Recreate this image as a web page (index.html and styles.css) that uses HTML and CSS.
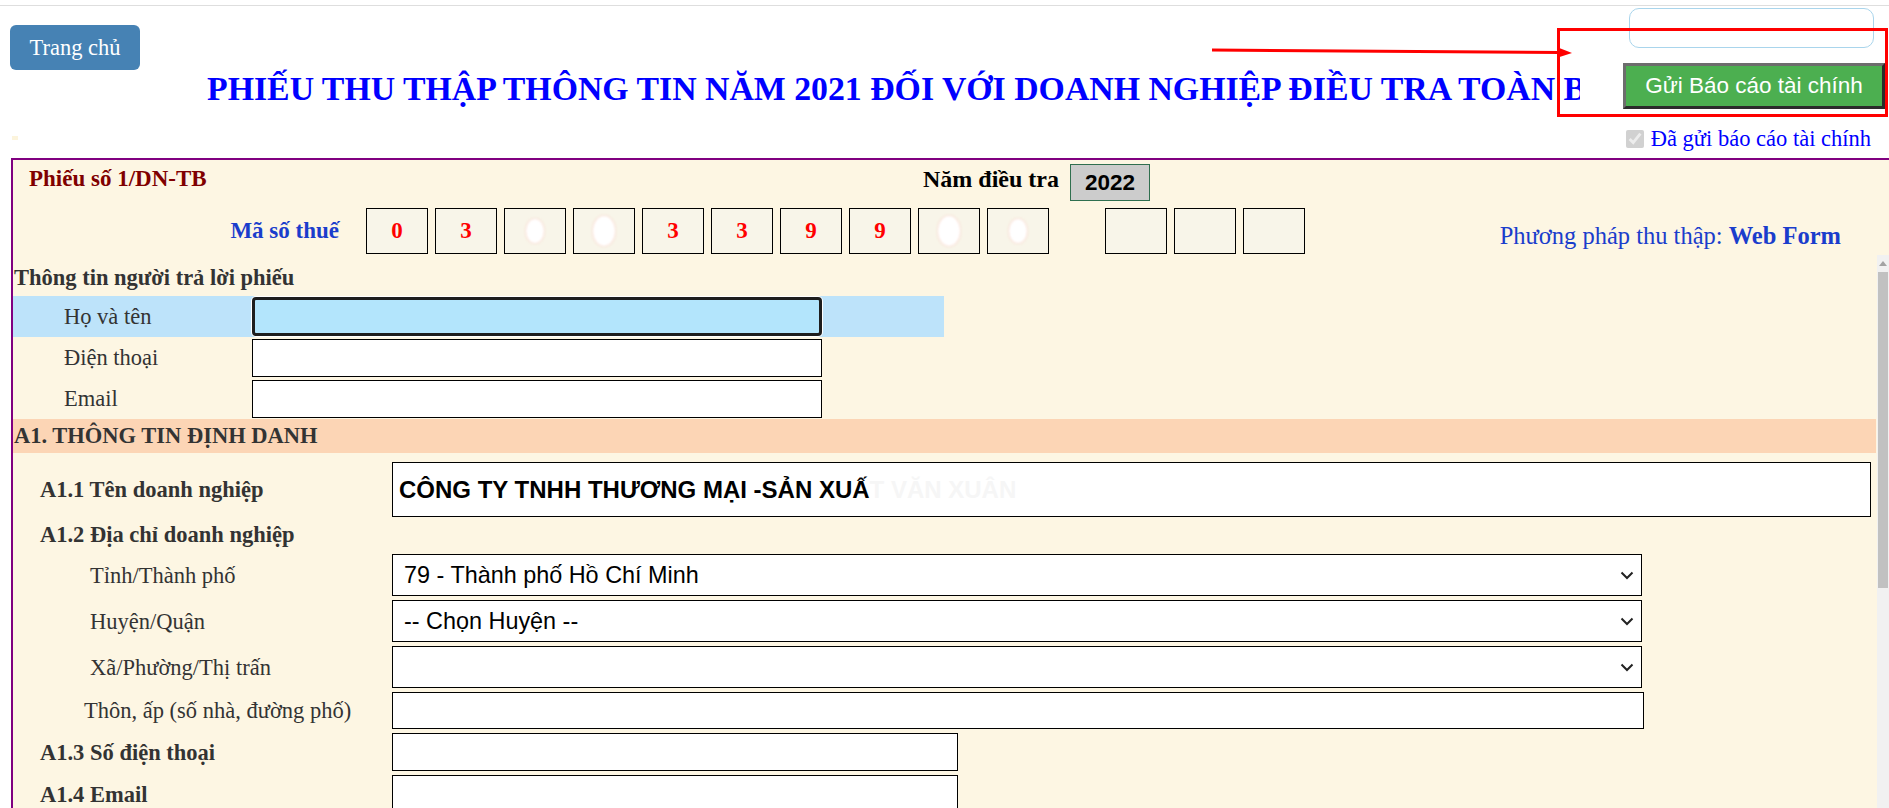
FILE: index.html
```html
<!DOCTYPE html>
<html lang="vi">

<head>
    <meta charset="UTF-8">
    <meta name="viewport" content="width=device-width, initial-scale=1.0">
    <title>Phiếu thu thập thông tin doanh nghiệp</title>
    <link rel="stylesheet" href="styles.css">
</head>

<body>
    <header class="top">
        <div class="top-left">
            <a href="#" class="btn-home">Trang chủ</a>
            <span class="mark"></span>
        </div>

        <h1 class="title">PHIẾU THU THẬP THÔNG TIN NĂM 2021 ĐỐI VỚI DOANH NGHIỆP ĐIỀU TRA TOÀN BỘ</h1>

        <div class="top-right">
            <div class="notice"></div>
            <button type="button" class="btn-send">Gửi Báo cáo tài chính</button>
            <label class="sent"><input type="checkbox" checked disabled>Đã gửi báo cáo tài chính</label>
        </div>
    </header>

    <!-- red pointer drawn on top of the header -->
    <svg class="callout" width="1889" height="160" viewBox="0 0 1889 160">
        <path d="M1212 50 L1560 52.5" stroke="#ff0000" stroke-width="3" fill="none" />
        <path d="M1558 47.5 L1572 53 L1558 57.5 Z" fill="#ff0000" />
        <rect x="1558.5" y="29.5" width="328" height="86" fill="none" stroke="#ff0000" stroke-width="3" />
    </svg>

    <main class="sheet">
        <div class="sheet-head">
            <div class="sheet-no">Phiếu số 1/DN-TB</div>
            <div class="year-label">Năm điều tra</div>
            <div class="year-box">2022</div>
        </div>

        <div class="tax-row">
            <div class="tax-label">Mã số thuế</div>
            <div class="digits">
                <span class="digit">0</span>
                <span class="digit">3</span>
                <span class="digit"><i class="smudge"></i></span>
                <span class="digit"><i class="smudge smudge-wide"></i></span>
                <span class="digit">3</span>
                <span class="digit">3</span>
                <span class="digit">9</span>
                <span class="digit">9</span>
                <span class="digit"><i class="smudge smudge-wide"></i></span>
                <span class="digit"><i class="smudge"></i></span>
            </div>
            <div class="digits branch">
                <span class="digit"></span>
                <span class="digit"></span>
                <span class="digit"></span>
            </div>
            <div class="method">Phương pháp thu thập: <b>Web Form</b></div>
        </div>

        <div class="scroll-area">
            <div class="scroll-body">
                <div class="resp-title">Thông tin người trả lời phiếu</div>
                <div class="resp-row is-active">
                    <label for="resp-name">Họ và tên</label>
                    <input type="text" id="resp-name" class="field field-focus">
                </div>
                <div class="resp-row">
                    <label for="resp-phone">Điện thoại</label>
                    <input type="text" id="resp-phone" class="field">
                </div>
                <div class="resp-row">
                    <label for="resp-email">Email</label>
                    <input type="text" id="resp-email" class="field">
                </div>

                <div class="section-bar">A1. THÔNG TIN ĐỊNH DANH</div>

                <div class="a1">
                    <div class="a1-row">
                        <label class="a1-label">A1.1 Tên doanh nghiệp</label>
                        <div class="field field-name">CÔNG TY TNHH THƯƠNG MẠI -SẢN XUẤ<span class="smear">T VĂN XUÂN</span></div>
                    </div>
                    <div class="a1-row a1-group">
                        <span class="a1-label">A1.2 Địa chỉ doanh nghiệp</span>
                    </div>
                    <div class="a1-row">
                        <label class="a1-label sub" for="tinh">Tỉnh/Thành phố</label>
                        <span class="select-wrap">
                            <select id="tinh" class="field field-select">
                                <option>79 - Thành phố Hồ Chí Minh</option>
                            </select>
                            <svg class="chevron" width="14" height="9" viewBox="0 0 14 9"><path d="M1.5 1.5 L7 7 L12.5 1.5" fill="none" stroke="#222" stroke-width="2" /></svg>
                        </span>
                    </div>
                    <div class="a1-row">
                        <label class="a1-label sub" for="huyen">Huyện/Quận</label>
                        <span class="select-wrap">
                            <select id="huyen" class="field field-select">
                                <option>-- Chọn Huyện --</option>
                            </select>
                            <svg class="chevron" width="14" height="9" viewBox="0 0 14 9"><path d="M1.5 1.5 L7 7 L12.5 1.5" fill="none" stroke="#222" stroke-width="2" /></svg>
                        </span>
                    </div>
                    <div class="a1-row">
                        <label class="a1-label sub" for="xa">Xã/Phường/Thị trấn</label>
                        <span class="select-wrap">
                            <select id="xa" class="field field-select">
                                <option></option>
                            </select>
                            <svg class="chevron" width="14" height="9" viewBox="0 0 14 9"><path d="M1.5 1.5 L7 7 L12.5 1.5" fill="none" stroke="#222" stroke-width="2" /></svg>
                        </span>
                    </div>
                    <div class="a1-row">
                        <label class="a1-label sub sub-long" for="thon">Thôn, ấp (số nhà, đường phố)</label>
                        <input type="text" id="thon" class="field field-street">
                    </div>
                    <div class="a1-row">
                        <label class="a1-label" for="sdt">A1.3 Số điện thoại</label>
                        <input type="text" id="sdt" class="field field-short">
                    </div>
                    <div class="a1-row">
                        <label class="a1-label" for="mail">A1.4 Email</label>
                        <input type="text" id="mail" class="field field-short">
                    </div>
                </div>
            </div>

            <div class="scrollbar">
                <span class="sb-up"></span>
                <span class="sb-thumb"></span>
            </div>
        </div>
    </main>
</body>

</html>
```

FILE: styles.css
```css
html,
body {
    overflow: hidden;
}

body {
    margin: 0;
    padding-top: 5px;
    position: relative;
    font-family: "Liberation Serif", "Times New Roman", serif;
    font-size: 22.5px;
    color: #333;
    background-color: #fff;
}

/* header: three pieces stacked in one grid cell */
.top {
    display: grid;
    border-top: 1px solid #dedede;
}

.top > * {
    grid-area: 1 / 1;
}

.top-left {
    justify-self: start;
    display: flex;
    flex-direction: column;
    align-items: flex-start;
    padding-left: 10px;
}

.btn-home {
    margin-top: 19px;
    width: 130px;
    height: 45px;
    display: flex;
    align-items: center;
    justify-content: center;
    background-color: #4682b4;
    color: #fff;
    text-decoration: none;
    border-radius: 6px;
}

.mark {
    width: 6px;
    height: 4px;
    margin: 66px 0 0 2px;
    background-color: #fcf4dc;
}

/* the long title is cut before the right-hand panel */
.title {
    justify-self: start;
    align-self: start;
    width: 1373px;
    margin: 63px 0 0 207px;
    overflow: hidden;
    font-size: 33.8px;
    line-height: 40px;
    color: #0000ff;
    white-space: nowrap;
}

.top-right {
    justify-self: end;
    display: flex;
    flex-direction: column;
    align-items: flex-end;
}

.notice {
    margin: 2px 15px 0 0;
    width: 245px;
    height: 40px;
    box-sizing: border-box;
    border: 1px solid #a9d5ec;
    border-radius: 10px;
    background-color: #fff;
}

.btn-send {
    margin: 15px 4px 0 0;
    width: 262px;
    height: 46px;
    padding: 0;
    font-family: "Liberation Sans", Arial, sans-serif;
    font-size: 22.5px;
    color: #fff;
    background-color: #4caf50;
    border: 3px solid;
    border-color: #6d6d6d #2b2b2b #2b2b2b #6d6d6d;
}

.sent {
    margin: 17px 18px 0 0;
    display: flex;
    align-items: center;
    gap: 7px;
    line-height: 26px;
    color: #0000ff;
}

.sent input {
    width: 18px;
    height: 18px;
    margin: 0;
}

.callout {
    position: absolute;
    top: 0;
    left: 0;
    pointer-events: none;
}

/* form sheet */
.sheet {
    margin: 6px 0 0 11px;
    border: 2px solid #800080;
    border-right: 0;
    background-color: #fdf6e3;
}

.sheet-head {
    display: flex;
    align-items: flex-start;
    height: 44px;
    padding: 4px 0 0 16px;
    box-sizing: border-box;
}

.sheet-no {
    flex: none;
    width: 894px;
    margin-top: 1px;
    font-size: 23px;
    line-height: 28px;
    font-weight: bold;
    color: #800000;
}

.year-label {
    margin-top: 1px;
    font-size: 24px;
    line-height: 28px;
    font-weight: bold;
    color: #000;
}

.year-box {
    margin-left: 11px;
    width: 80px;
    height: 37px;
    box-sizing: border-box;
    display: flex;
    align-items: center;
    justify-content: center;
    border: 1px solid #2f6f4f;
    background-color: #cccccc;
    font-family: "Liberation Sans", Arial, sans-serif;
    font-size: 22.5px;
    font-weight: bold;
    color: #000;
}

.tax-row {
    display: flex;
    align-items: flex-start;
    height: 51px;
    padding-top: 4px;
    box-sizing: border-box;
}

.tax-label {
    flex: none;
    width: 353px;
    padding-right: 27px;
    margin-top: 9px;
    box-sizing: border-box;
    text-align: right;
    font-size: 23px;
    line-height: 28px;
    font-weight: bold;
    color: #1a3dcc;
}

.digits {
    display: flex;
    gap: 7px;
}

.digits.branch {
    margin-left: 56px;
}

.digit {
    width: 62px;
    height: 46px;
    box-sizing: border-box;
    display: flex;
    align-items: center;
    justify-content: center;
    border: 1px solid #000;
    background-color: #f8f5e9;
    font-size: 23px;
    font-weight: bold;
    color: #ff0000;
}

.smudge {
    width: 18px;
    height: 24px;
    border-radius: 50%;
    background-color: #fff;
    box-shadow: 0 0 2px rgba(255, 120, 120, 0.5);
    filter: blur(1px);
}

.smudge-wide {
    width: 22px;
    height: 30px;
}

.method {
    margin: 14px 48px 0 auto;
    font-size: 24.5px;
    line-height: 28px;
    color: #1a3dcc;
}

/* lower part with its own scrollbar */
.scroll-area {
    display: flex;
    height: 553px;
    overflow: hidden;
}

.scroll-body {
    flex: 1;
    min-width: 0;
}

.scrollbar {
    flex: none;
    width: 12px;
    display: flex;
    flex-direction: column;
    align-items: center;
    background-color: #f1f1f1;
}

.sb-up {
    margin-top: 6px;
    border-left: 4px solid transparent;
    border-right: 4px solid transparent;
    border-bottom: 5px solid #a3a3a3;
}

.sb-thumb {
    margin-top: 6px;
    width: 10px;
    height: 316px;
    background-color: #c1c1c1;
}

.resp-title {
    padding: 9px 0 5px 1px;
    line-height: 27px;
    font-weight: bold;
}

.resp-row {
    display: flex;
    align-items: center;
    width: 931px;
    height: 41px;
}

.resp-row label {
    flex: none;
    width: 239px;
    padding-left: 51px;
    box-sizing: border-box;
    line-height: 27px;
}

.resp-row.is-active {
    background-color: #bde3fa;
}

.field {
    box-sizing: border-box;
    margin: 0;
    border: 1px solid #000;
    border-radius: 0;
    background-color: #fff;
    font-family: "Liberation Sans", Arial, sans-serif;
    font-size: 23.4px;
    color: #000;
}

.resp-row .field {
    width: 570px;
    height: 38px;
}

.resp-row .field-focus {
    height: 39px;
    border: 3px solid #1e1e1e;
    border-radius: 4px;
    background-color: #b3e5fc;
    box-shadow: 0 0 0 1px #fff;
}

.section-bar {
    height: 34px;
    margin-right: 1px;
    padding-left: 1px;
    line-height: 34px;
    font-weight: bold;
    background-color: #fcd5b5;
}

.a1 {
    display: flex;
    flex-direction: column;
    gap: 4px;
    padding-top: 9px;
}

.a1-row {
    display: flex;
    align-items: center;
}

.a1-group {
    height: 29px;
    align-items: flex-start;
}

.a1-label {
    flex: none;
    width: 379px;
    padding-left: 27px;
    box-sizing: border-box;
    line-height: 27px;
    font-weight: bold;
}

.a1-label.sub {
    padding-left: 77px;
    font-weight: normal;
}

.a1-label.sub-long {
    padding-left: 71px;
}

.field-name {
    flex: 1;
    height: 55px;
    margin-right: 6px;
    padding-left: 6px;
    display: flex;
    align-items: center;
    font-size: 24px;
    font-weight: bold;
    white-space: nowrap;
}

.smear {
    color: #f6f6f6;
}

/* select with a drawn arrow on top of it */
.select-wrap {
    position: relative;
    display: flex;
}

.field-select {
    width: 1250px;
    height: 42px;
    padding: 0 30px 0 11px;
    appearance: none;
    -webkit-appearance: none;
}

.chevron {
    position: absolute;
    right: 8px;
    top: 17px;
    pointer-events: none;
}

.field-street {
    width: 1252px;
    height: 37px;
}

.field-short {
    width: 566px;
    height: 38px;
}
```
